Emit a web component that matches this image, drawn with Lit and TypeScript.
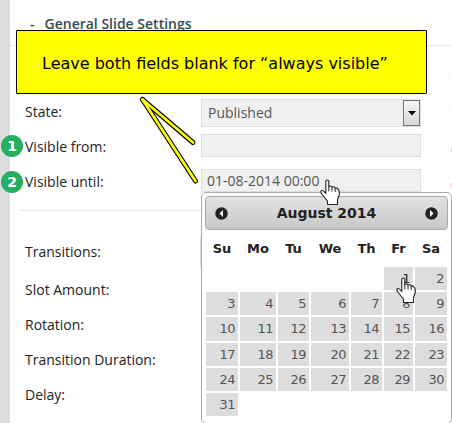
import { LitElement, html, css } from "lit";
import { customElement, property } from "lit/decorators.js";

@customElement("hand-cursor")
class HandCursor extends LitElement {
  static styles = css`
    :host { display: block; width: 20px; height: 27px; }
    svg { display: block; }
  `;
  render() {
    return html`<svg width="20" height="27" viewBox="0 0 20 27">
      <path d="M5.8 14.5V2.6Q5.8 1 7.3 1T8.8 2.6V7.6Q10.8 6 12 8.2Q14 7 15.2 9.2Q17 8.2 18.7 11Q19.6 13 19.2 16L17.5 20.5V25.5H7.5V22L2.2 15.5Q.2 12.8 1.2 11.8Q2.6 10.8 4.5 13Z"
        fill="#fff" stroke="#222" stroke-width="1.1" stroke-linejoin="round"/>
      <path d="M8.8 7.5V12.5M12 8.2V12.5M15.2 9.2V13" stroke="#222" fill="none"/>
    </svg>`;
  }
}

@customElement("date-picker")
class DatePicker extends LitElement {
  @property() month = "";
  static styles = css`
    :host { display: block; box-sizing: border-box; width: 251px; height: 232px; background: #fff; border: 1px solid #aaa; border-radius: 5px; padding: 3px 3px 0 3px;
      font-family: Verdana, "DejaVu Sans", sans-serif; }
    .head { height: 34px; box-sizing: border-box; border: 1px solid #aaa; border-radius: 4px; background: linear-gradient(#e2e2e2, #c8c8c8);
      display: flex; align-items: center; justify-content: space-between; padding: 0 9px; color: #222; }
    .title { font-size: 14px; font-weight: bold; line-height: 20px; }
    .grid { display: grid; grid-template-columns: 32px 36px 31px 38px 31px 29px 32px; column-gap: 2px; padding-left: 1px; }
    .names { height: 37px; align-items: center; text-align: center; font-size: 13px; font-weight: bold; color: #222; }
    .days { grid-template-rows: repeat(6, 23.2px); row-gap: 2px; font-size: 13px; letter-spacing: -0.5px; color: #555; }
    .day { background: #ddd; text-align: right; padding-right: 3px; line-height: 24px; }
    .first { grid-column: 6; color: #223; }
  `;
  private arrow(d: string) {
    return html`<svg width="13" height="13" viewBox="0 0 13 13"><circle cx="6.5" cy="6.5" r="6.2" fill="#222"/><path d=${d} fill="#fff"/></svg>`;
  }
  render() {
    const days = Array.from({ length: 31 }, (_, i) => i + 1);
    return html`
      <div class="head">${this.arrow("M8 3V10L4.5 6.5Z")}<span class="title">${this.month}</span>${this.arrow("M5 3V10L8.5 6.5Z")}</div>
      <div class="grid names">${["Su", "Mo", "Tu", "We", "Th", "Fr", "Sa"].map((n) => html`<span>${n}</span>`)}</div>
      <div class="grid days">${days.map((d) => html`<span class="day ${d === 1 ? "first" : ""}">${d}</span>`)}</div>`;
  }
}

@customElement("app-root")
class AppRoot extends LitElement {
  static styles = css`
    :host { display: block; position: relative; box-sizing: border-box; width: 452px; height: 423px; overflow: hidden; padding-left: 10px;
      background: linear-gradient(90deg, #dcdcdc 10px, #fff 10px);
      font-family: "Open Sans", sans-serif; font-size: 14px; color: #222; }
    .heading { height: 46px; box-sizing: border-box; padding: 14px 0 0 20px; border-bottom: 1px solid #e8e8e8; font-weight: 600; line-height: 20px; color: #34495e; display: flex; gap: 10px; }
    .rows { padding: 53px 0 0 15px; }
    .row { display: grid; grid-template-columns: 176px 220px; align-items: start; height: 35px; line-height: 26px; }
    .row.last { height: 41px; }
    .field { box-sizing: border-box; height: 23px; border: 1px solid #ddd; background: #f0f0f0; padding-left: 5px; line-height: 22px; color: #555; }
    .select { height: 28px; padding-left: 6px; line-height: 26px; display: flex; justify-content: space-between; }
    .drop { box-sizing: border-box; width: 17px; height: 26px; border: 1px solid #777; background: linear-gradient(#f6f6f6, #d8d8d8); display: flex; align-items: center; justify-content: center; }
    .rule { margin-left: 10px; border-top: 1px solid #e8e8e8; }
    .more { padding: 26px 0 0 15px; }
    .more .row { line-height: 30px; }
    .more .row:first-child { height: 38px; grid-template-columns: 175px 220px; }
    .more .field { height: 30px; }
    .over { position: absolute; }
    .picker { left: 201px; top: 192px; }
    .callout { left: 16px; top: 30px; width: 411px; height: 64px; box-sizing: border-box; border: 1px solid #000; border-radius: 1px; background: #ff0;
      padding-left: 25px; font: 16px/65px Verdana, "DejaVu Sans", sans-serif; color: #000; white-space: nowrap; }
    .tails { left: 135px; top: 94px; }
    .badge { left: 1px; width: 22px; height: 22px; border-radius: 50%; background: #27ae60; color: #fff; text-align: center; font: bold 14px/22px "DejaVu Sans", sans-serif; }
    .one { top: 135px; }
    .two { top: 171px; }
    .c1 { left: 320px; top: 179px; }
    .c2 { left: 396px; top: 277px; }
    .edge { left: 451px; top: 73px; }
  `;
  render() {
    return html`
      <div class="heading"><span>-</span><span>General Slide Settings</span></div>
      <div class="rows">
        <div class="row"><span>State:</span><div class="field select">Published<span class="drop"><svg width="8" height="5"><path d="M0 0H8L4 4.5Z"/></svg></span></div></div>
        <div class="row"><span>Visible from:</span><div class="field"></div></div>
        <div class="row last"><span>Visible until:</span><div class="field">01-08-2014 00:00</div></div>
      </div>
      <div class="rule"></div>
      <div class="more">
        <div class="row"><span>Transitions:</span><div class="field"></div></div>
        ${["Slot Amount:", "Rotation:", "Transition Duration:", "Delay:"].map((t) => html`<div class="row"><span>${t}</span></div>`)}
      </div>
      <svg class="over edge" width="1" height="116"><path d="M0 0H1V1H0ZM0 36H1V37H0ZM0 75H1V79H0ZM0 110H1V114H0Z" fill="#ddd0d0"/></svg>
      <date-picker class="over picker" month="August 2014"></date-picker>
      <div class="over callout">Leave both fields blank for “always visible”</div>
      <svg class="over tails" width="65" height="95" fill="none" stroke-linecap="round">
        <g stroke="#000" stroke-width="5"><path d="M7.5 5.5L58 48.5"/><path d="M7.5 5.5L60.5 87"/></g>
        <g stroke="#ff0" stroke-width="2.8"><path d="M7.5 5.5L58 48.5"/><path d="M7.5 5.5L60.5 87"/></g>
      </svg>
      <span class="over badge one">1</span>
      <span class="over badge two">2</span>
      <hand-cursor class="over c1"></hand-cursor>
      <hand-cursor class="over c2"></hand-cursor>`;
  }
}
